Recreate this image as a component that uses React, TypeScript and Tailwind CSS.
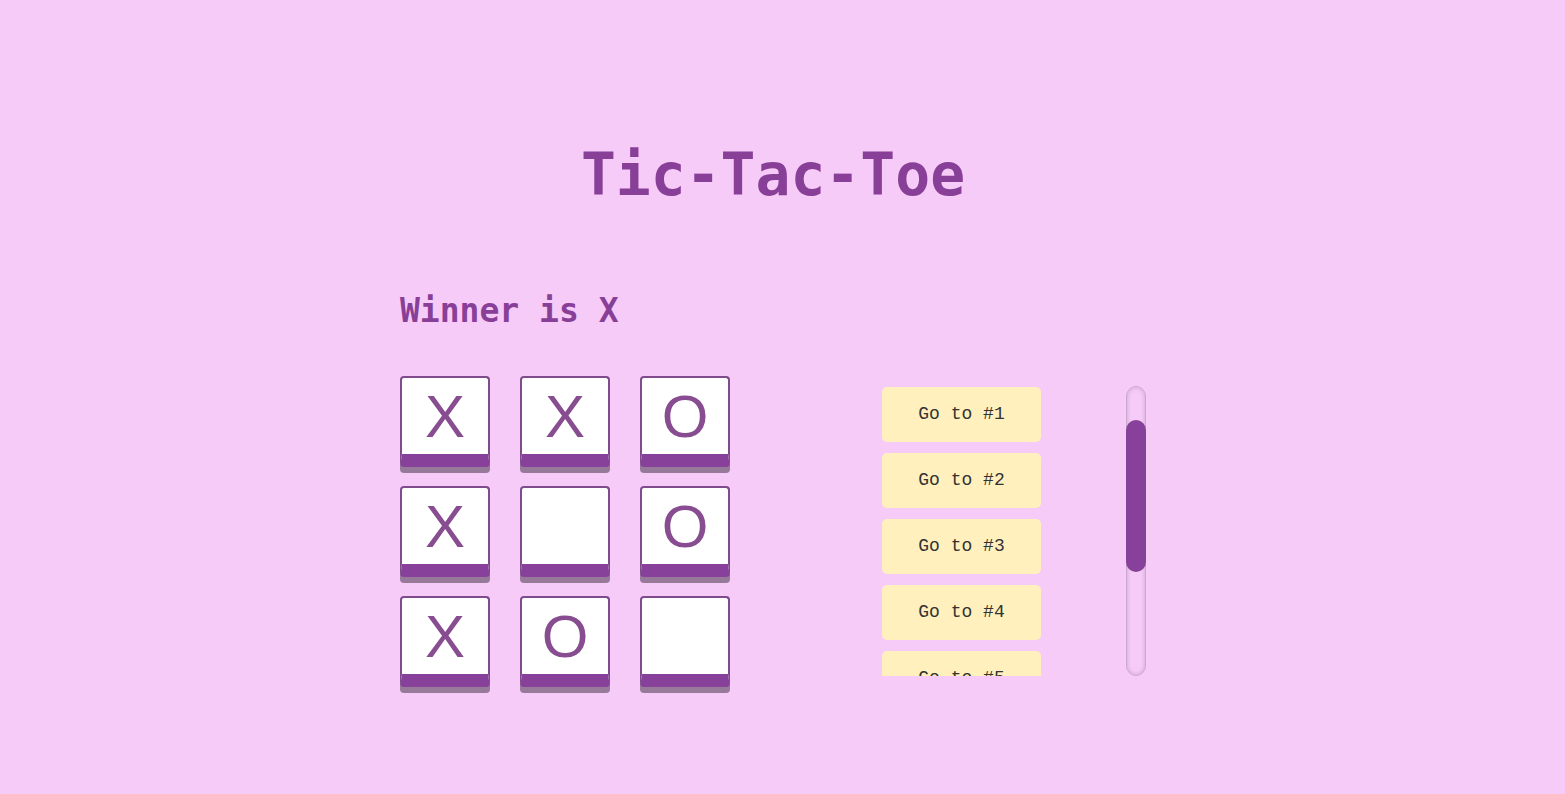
import React from "react";

const board: (string | null)[] = ["X", "X", "O", "X", null, "O", "X", "O", null];

function Cell({ v }: { v: string | null }) {
  return (
    <div className="w-[90px] h-[91px] bg-white rounded-[4px] border-2 border-[#7f4b8c] border-b-[13px] border-b-[#88419a] shadow-[0_6px_0_#977a9a] flex items-center justify-center">
      <span
        className="text-[60px] leading-[60px] text-[#874d90] pt-[2px]"
        style={{ fontFamily: '"Liberation Sans", Arial, sans-serif' }}
      >
        {v ?? ""}
      </span>
    </div>
  );
}

export default function App() {
  const mono = { fontFamily: '"DejaVu Sans Mono", monospace' };
  return (
    <div className="w-full h-[794px] bg-[#f7cbf7] overflow-hidden">
      <div className="ml-[400px] w-[746px] flex flex-col">
        <h1
          className="mt-[140px] text-center text-[58px] leading-[70px] font-bold text-[#883f98]"
          style={mono}
        >
          Tic-Tac-Toe
        </h1>
        <div
          className="mt-[81px] text-[33px] leading-[40px] font-bold text-[#883f98]"
          style={mono}
        >
          Winner is X
        </div>
        <div className="mt-[45px] flex flex-row items-start">
          <div className="grid grid-cols-[repeat(3,90px)] gap-x-[30px] gap-y-[19px]">
            {board.map((v, i) => (
              <Cell key={i} v={v} />
            ))}
          </div>
          <div className="ml-[152px] mt-[11px] h-[289px] w-[159px] overflow-hidden flex flex-col gap-[11px]">
            {[1, 2, 3, 4, 5, 6].map((n) => (
              <div
                key={n}
                className="shrink-0 h-[55px] w-[159px] rounded-[5px] bg-[#fff0bd] flex items-center justify-center text-[18px] text-[#333]"
                style={{ fontFamily: '"Liberation Mono", "Courier New", monospace' }}
              >
                Go to #{n}
              </div>
            ))}
          </div>
          <div className="ml-[85px] mt-[10px] relative w-[20px] h-[290px] rounded-full border border-[#caa9ce] shadow-[inset_0_0_4px_rgba(120,80,130,0.35)]">
            <div className="absolute left-[-1px] top-[33px] w-[20px] h-[152px] rounded-full bg-[#88419a]" />
          </div>
        </div>
      </div>
    </div>
  );
}
